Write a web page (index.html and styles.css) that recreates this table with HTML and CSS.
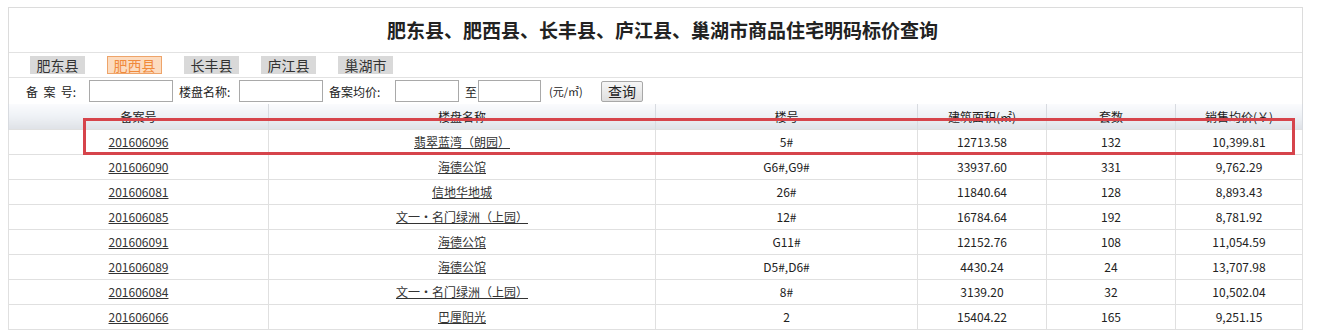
FILE: index.html
```html
<!DOCTYPE html>
<html lang="zh-CN">
<head>
<meta charset="utf-8">
<title>商品住宅明码标价查询</title>
<link rel="stylesheet" href="styles.css">
</head>
<body>
<div class="page">
  <div class="box">
    <div class="title">肥东县、肥西县、长丰县、庐江县、巢湖市商品住宅明码标价查询</div>
    <div class="tabs">
      <span class="tab">肥东县</span>
      <span class="tab active">肥西县</span>
      <span class="tab">长丰县</span>
      <span class="tab">庐江县</span>
      <span class="tab">巢湖市</span>
    </div>
    <div class="search">
      <span class="lbl lbl-1">备&nbsp;&nbsp;案&nbsp;&nbsp;号:</span>
      <span class="inp inp-a"></span>
      <span class="lbl lbl-2">楼盘名称:</span>
      <span class="inp inp-a"></span>
      <span class="lbl lbl-3">备案均价:</span>
      <span class="inp inp-b"></span>
      <span class="lbl lbl-to">至</span>
      <span class="inp inp-c"></span>
      <span class="lbl lbl-unit">(元/㎡)</span>
      <span class="btn">查询</span>
    </div>
    <table class="grid">
      <colgroup>
        <col class="c1"><col class="c2"><col class="c3"><col class="c4"><col class="c5"><col class="c6">
      </colgroup>
      <thead>
        <tr><th>备案号</th><th>楼盘名称</th><th>楼号</th><th>建筑面积(㎡)</th><th>套数</th><th>销售均价(￥)</th></tr>
      </thead>
      <tbody>
        <tr><td><a href="#">201606096</a></td><td><a href="#">翡翠蓝湾（朗园）</a></td><td>5#</td><td>12713.58</td><td>132</td><td>10,399.81</td></tr>
        <tr><td><a href="#">201606090</a></td><td><a href="#">海德公馆</a></td><td>G6#,G9#</td><td>33937.60</td><td>331</td><td>9,762.29</td></tr>
        <tr><td><a href="#">201606081</a></td><td><a href="#">信地华地城</a></td><td>26#</td><td>11840.64</td><td>128</td><td>8,893.43</td></tr>
        <tr><td><a href="#">201606085</a></td><td><a href="#">文一·名门绿洲（上园）</a></td><td>12#</td><td>16784.64</td><td>192</td><td>8,781.92</td></tr>
        <tr><td><a href="#">201606091</a></td><td><a href="#">海德公馆</a></td><td>G11#</td><td>12152.76</td><td>108</td><td>11,054.59</td></tr>
        <tr><td><a href="#">201606089</a></td><td><a href="#">海德公馆</a></td><td>D5#,D6#</td><td>4430.24</td><td>24</td><td>13,707.98</td></tr>
        <tr><td><a href="#">201606084</a></td><td><a href="#">文一·名门绿洲（上园）</a></td><td>8#</td><td>3139.20</td><td>32</td><td>10,502.04</td></tr>
        <tr><td><a href="#">201606066</a></td><td><a href="#">巴厘阳光</a></td><td>2</td><td>15404.22</td><td>165</td><td>9,251.15</td></tr>
      </tbody>
    </table>
  </div>
  <div class="mark"></div>
</div>
</body>
</html>
```
FILE: styles.css
```css
html, body {
  margin: 0;
  padding: 0;
  background: #fff;
}
body {
  font-family: "Noto Sans CJK SC", "DejaVu Sans", sans-serif;
  font-size: 12px;
  color: #333;
}
.page {
  position: relative;
  padding: 7px 0 0 8px;
}
.box {
  width: 1293px;
  border: 1px solid #dcdcdc;
  border-bottom: none;
}
.title {
  height: 44px;
  line-height: 44px;
  text-align: center;
  padding-left: 14px;
  font-size: 19px;
  font-weight: bold;
  color: #222;
  border-bottom: 1px solid #e2e2e2;
}
.tabs {
  height: 24px;
  display: flex;
  align-items: center;
  gap: 22px;
  padding-left: 21px;
  border-bottom: 1px solid #e2e2e2;
}
.tab {
  width: 55px;
  height: 18px;
  line-height: 18px;
  text-align: center;
  font-size: 14px;
  background: #d9d9d9;
  color: #333;
  box-sizing: border-box;
}
.tab.active {
  background: #fcdcc0;
  border: 1px solid #eea46a;
  color: #f08a3c;
  line-height: 16px;
}
.search {
  height: 26px;
  display: flex;
  align-items: center;
  padding-left: 17px;
}
.lbl {
  flex: none;
  white-space: nowrap;
  color: #222;
}
.lbl-1 { width: 63px; }
.lbl-2 { width: 60px; margin-left: 6px; }
.lbl-3 { width: 66px; margin-left: 6px; }
.lbl-to { width: 13px; margin-left: 6px; }
.lbl-unit { width: 52px; margin-left: 8px; font-size: 11px; }
.inp {
  flex: none;
  height: 22px;
  box-sizing: border-box;
  border: 1px solid #a9a9a9;
  background: #fff;
}
.inp-a { width: 84px; }
.inp-b { width: 64px; }
.inp-c { width: 63px; }
.btn {
  flex: none;
  width: 42px;
  height: 21px;
  box-sizing: border-box;
  border: 1px solid #a8a8a8;
  border-radius: 2px;
  background: linear-gradient(#f6f6f6, #dedede);
  font-size: 14px;
  line-height: 19px;
  text-align: center;
  color: #222;
}
.grid {
  width: 1294px;
  margin-left: -1px;
  border-collapse: collapse;
  table-layout: fixed;
}
.c1 { width: 260px; }
.c2 { width: 387px; }
.c3 { width: 262px; }
.c4 { width: 129px; }
.c5 { width: 129px; }
.c6 { width: 127px; }
.grid th {
  height: 25px;
  padding: 0;
  font-weight: normal;
  font-size: 12px;
  line-height: 16px;
  vertical-align: bottom;
  padding-bottom: 4px;
  box-sizing: border-box;
  color: #222;
  background: linear-gradient(#fafbfd 0%, #eef1f5 50%, #dfe2e7 100%);
  border-left: 1px solid #d8dbe0;
  border-right: 1px solid #d8dbe0;
}
.grid td {
  height: 24px;
  padding: 0;
  text-align: center;
  line-height: 24px;
  border: 1px solid #e0e0e0;
  color: #222;
  font-size: 12px;
}
.grid a {
  color: #333;
  text-decoration: underline;
}
.mark {
  position: absolute;
  left: 83px;
  top: 118px;
  width: 1212px;
  height: 37px;
  box-sizing: border-box;
  border: 3px solid #d6444b;
}
```
